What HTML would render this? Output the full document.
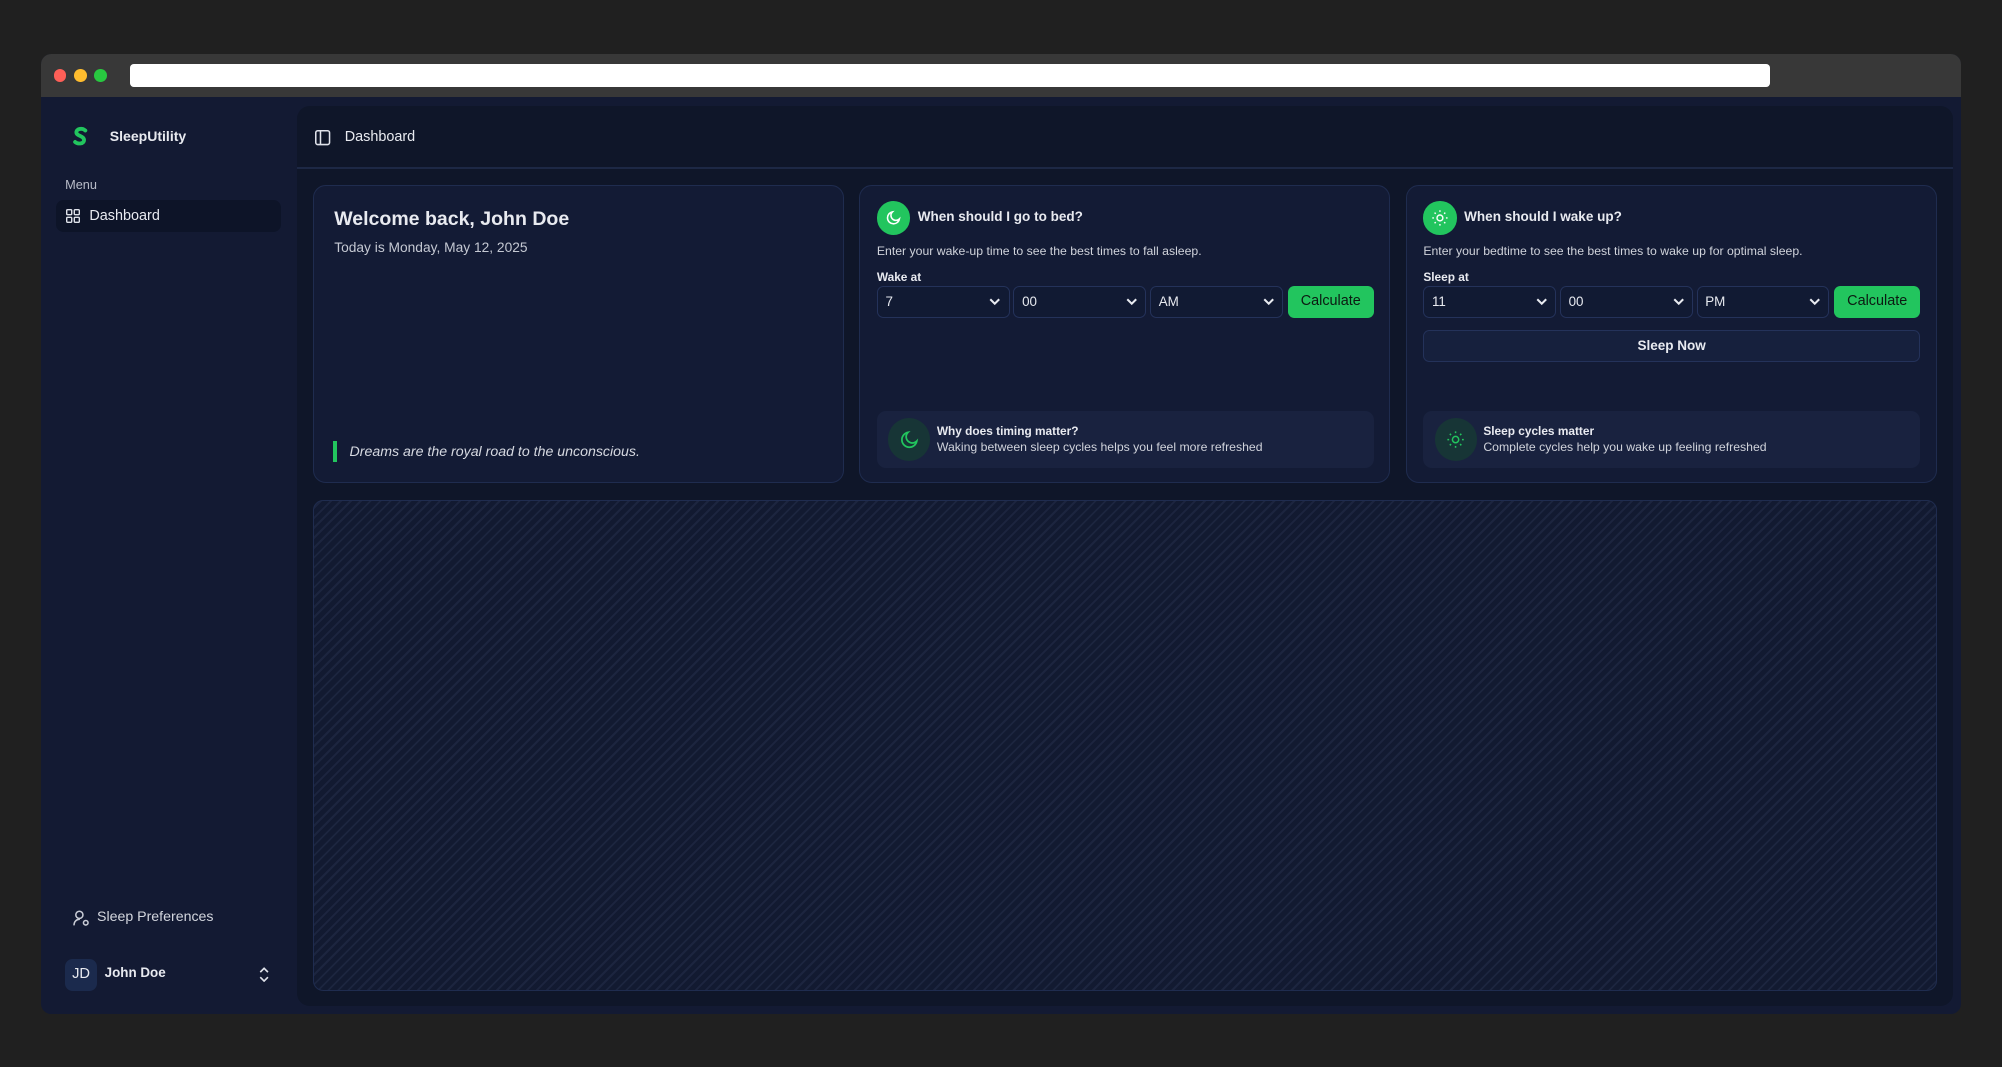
<!DOCTYPE html>
<html><head><meta charset="utf-8"><style>
*{box-sizing:border-box;margin:0;padding:0}
html,body{width:2002px;height:1067px;overflow:hidden;background:#202020;font-family:"Liberation Sans",sans-serif}
#w{width:1568px;height:836px;position:relative;zoom:1.27679}
.abs{position:absolute}
.win{left:32px;top:42px;width:1504px;height:752px;border-radius:8px;overflow:hidden;background:#131a33}
.tb{left:0;top:0;width:1504px;height:34px;background:#383838}
.dot{width:10px;height:10px;border-radius:50%;top:12px}
.url{left:70px;top:8px;width:1284px;height:18px;background:#fff;border-radius:3px}
.main{left:201px;top:41px;width:1297px;height:705px;background:#0f1629;border-radius:10px}
.t{color:#e8eaf0;white-space:nowrap}
.card{background:#131b35;border:1px solid #1f2c4f;border-radius:10px;top:62px;height:233px;width:416px}
.sel{top:78px;height:25px;width:104px;border:1px solid #24325a;border-radius:5px;background:#111a33;color:#e8eaf0;font-size:10.5px;padding:6px 6px}
.sel svg{position:absolute;right:6px;top:9px}
.btn{top:78px;height:25px;width:67px;background:#22c55e;border-radius:5px;color:#0c1a12;font-size:11.3px;text-align:center;line-height:25px}
.info{left:13px;top:176px;width:389px;height:45px;background:#19223f;border-radius:7px}
.ic{left:9px;top:6px;width:33px;height:33px;border-radius:50%;background:#173536}
.gc{left:13px;top:12px;width:26px;height:26px;border-radius:50%;background:#22c55e}
</style></head><body><div id="w">
<div class="abs win">
 <div class="abs tb"><div class="abs dot" style="left:10px;background:#fe5f57"></div><div class="abs dot" style="left:26px;background:#febc2e"></div><div class="abs dot" style="left:42px;background:#28c840"></div><div class="abs url"></div></div>
 <svg class="abs" style="left:23px;top:57px" width="16" height="16" viewBox="0 0 16 16"><path d="M12 3.5C10 1.5 5 1.8 5 5c0 3 6 2.5 6 6 0 3-4.5 3.5-7 1.5" stroke="#22c55e" stroke-width="3" fill="none" stroke-linecap="round"/></svg>
 <div class="abs t" style="left:54px;top:58px;font-size:11px;font-weight:bold">SleepUtility</div>
 <div class="abs t" style="left:19px;top:97px;font-size:10px;color:#b8bcc8">Menu</div>
 <div class="abs" style="left:12px;top:115px;width:176px;height:25px;background:#0d1428;border-radius:6px"></div>
 <svg class="abs" style="left:20px;top:122px" width="11" height="11" viewBox="0 0 12 12" fill="none" stroke="#dfe2ea" stroke-width="1.2"><rect x=".6" y=".6" width="4.3" height="4.3" rx=".8"/><rect x="7.1" y=".6" width="4.3" height="4.3" rx=".8"/><rect x=".6" y="7.1" width="4.3" height="4.3" rx=".8"/><rect x="7.1" y="7.1" width="4.3" height="4.3" rx=".8"/></svg>
 <div class="abs t" style="left:38px;top:121px;font-size:11.3px">Dashboard</div>
 <svg class="abs" style="left:25px;top:671px" width="13" height="13" viewBox="0 0 13 13" fill="none" stroke="#c9ccd6" stroke-width="1.2"><circle cx="5" cy="3.8" r="2.8"/><path d="M.8 12c0-3 2-4.8 4.6-4.8"/><circle cx="10" cy="10" r="1.8"/></svg>
 <div class="abs t" style="left:44px;top:670px;font-size:11.1px;color:#d3d6de">Sleep Preferences</div>
 <div class="abs" style="left:19px;top:709px;width:25px;height:25px;background:#1b2a4d;border-radius:6px;color:#e8eaf0;font-size:11.5px;text-align:center;line-height:25px">JD</div>
 <div class="abs t" style="left:50px;top:714px;font-size:10.5px;font-weight:bold">John Doe</div>
 <svg class="abs" style="left:171px;top:715px" width="8" height="12" viewBox="0 0 8 12" fill="none" stroke="#dfe2ea" stroke-width="1.3"><path d="M1 4l3-3 3 3M1 8l3 3 3-3"/></svg>
 <div class="abs main">
  <svg class="abs" style="left:14px;top:19px" width="12" height="12" viewBox="0 0 12 12" fill="none" stroke="#dfe2ea" stroke-width="1.2"><rect x=".6" y=".6" width="10.8" height="10.8" rx="1.5"/><path d="M4.3 .6v10.8"/></svg>
  <div class="abs t" style="left:37px;top:18px;font-size:11.3px">Dashboard</div>
  <div class="abs" style="left:0;top:48px;width:1297px;height:1px;background:#1d2845"></div>
  <div class="abs card" style="left:12px">
   <div class="abs t" style="left:16px;top:17px;font-size:15.3px;font-weight:bold">Welcome back, John Doe</div>
   <div class="abs t" style="left:16px;top:42px;font-size:10.8px;color:#c4c8d2">Today is Monday, May 12, 2025</div>
   <div class="abs" style="left:15px;top:200px;width:3px;height:16px;background:#22c55e"></div>
   <div class="abs t" style="left:28px;top:202px;font-size:11.1px;font-style:italic;color:#d6d9e1">Dreams are the royal road to the unconscious.</div>
  </div>
  <div class="abs card" style="left:440px">
   <div class="abs gc"><svg class="abs" style="left:7px;top:7px" width="12" height="12" viewBox="0 0 12 12" fill="none" stroke="#fff" stroke-width="1.2"><path d="M10.5 7A4.7 4.7 0 1 1 5 1.5 3.7 3.7 0 0 0 10.5 7z"/></svg></div>
   <div class="abs t" style="left:45px;top:18px;font-size:10.6px;font-weight:bold">When should I go to bed?</div>
   <div class="abs t" style="left:13px;top:45px;font-size:9.6px;color:#d0d3db">Enter your wake-up time to see the best times to fall asleep.</div>
   <div class="abs t" style="left:13px;top:66px;font-size:9.3px;font-weight:bold">Wake at</div>
   <div class="abs sel" style="left:13px">7<svg width="9" height="6" viewBox="0 0 9 6"><path d="M1 1l3.5 3.5L8 1" stroke="#e8eaf0" stroke-width="1.6" fill="none"/></svg></div>
   <div class="abs sel" style="left:120px">00<svg width="9" height="6" viewBox="0 0 9 6"><path d="M1 1l3.5 3.5L8 1" stroke="#e8eaf0" stroke-width="1.6" fill="none"/></svg></div>
   <div class="abs sel" style="left:227px">AM<svg width="9" height="6" viewBox="0 0 9 6"><path d="M1 1l3.5 3.5L8 1" stroke="#e8eaf0" stroke-width="1.6" fill="none"/></svg></div>
   <div class="abs btn" style="left:335px">Calculate</div>
   <div class="abs info"><div class="abs ic"><svg class="abs" style="left:9px;top:9px" width="15" height="15" viewBox="0 0 12 12" fill="none" stroke="#22c55e" stroke-width="1.1"><path d="M10.5 7A4.7 4.7 0 1 1 5 1.5 3.7 3.7 0 0 0 10.5 7z"/></svg></div>
    <div class="abs t" style="left:47px;top:10px;font-size:9.3px;font-weight:bold">Why does timing matter?</div>
    <div class="abs t" style="left:47px;top:23px;font-size:9.6px;color:#d0d3db">Waking between sleep cycles helps you feel more refreshed</div></div>
  </div>
  <div class="abs card" style="left:868px">
   <div class="abs gc"><svg class="abs" style="left:6px;top:6px" width="14" height="14" viewBox="0 0 14 14" fill="none" stroke="#fff" stroke-width="1.1"><circle cx="7" cy="7" r="2.3"/><path d="M7 1v1.3M7 11.7V13M1 7h1.3M11.7 7H13M2.8 2.8l.9.9M10.3 10.3l.9.9M2.8 11.2l.9-.9M10.3 3.7l.9-.9"/></svg></div>
   <div class="abs t" style="left:45px;top:18px;font-size:10.6px;font-weight:bold">When should I wake up?</div>
   <div class="abs t" style="left:13px;top:45px;font-size:9.6px;color:#d0d3db">Enter your bedtime to see the best times to wake up for optimal sleep.</div>
   <div class="abs t" style="left:13px;top:66px;font-size:9.3px;font-weight:bold">Sleep at</div>
   <div class="abs sel" style="left:13px">11<svg width="9" height="6" viewBox="0 0 9 6"><path d="M1 1l3.5 3.5L8 1" stroke="#e8eaf0" stroke-width="1.6" fill="none"/></svg></div>
   <div class="abs sel" style="left:120px">00<svg width="9" height="6" viewBox="0 0 9 6"><path d="M1 1l3.5 3.5L8 1" stroke="#e8eaf0" stroke-width="1.6" fill="none"/></svg></div>
   <div class="abs sel" style="left:227px">PM<svg width="9" height="6" viewBox="0 0 9 6"><path d="M1 1l3.5 3.5L8 1" stroke="#e8eaf0" stroke-width="1.6" fill="none"/></svg></div>
   <div class="abs btn" style="left:335px">Calculate</div>
   <div class="abs" style="left:13px;top:113px;width:389px;height:25px;background:#16203d;border:1px solid #24325a;border-radius:5px;color:#e8eaf0;font-size:10.6px;font-weight:bold;text-align:center;line-height:23px">Sleep Now</div>
   <div class="abs info"><div class="abs ic"><svg class="abs" style="left:9px;top:9px" width="15" height="15" viewBox="0 0 14 14" fill="none" stroke="#22c55e" stroke-width="1.1"><circle cx="7" cy="7" r="2.3"/><path d="M7 1v1.3M7 11.7V13M1 7h1.3M11.7 7H13M2.8 2.8l.9.9M10.3 10.3l.9.9M2.8 11.2l.9-.9M10.3 3.7l.9-.9"/></svg></div>
    <div class="abs t" style="left:47px;top:10px;font-size:9.3px;font-weight:bold">Sleep cycles matter</div>
    <div class="abs t" style="left:47px;top:23px;font-size:9.6px;color:#d0d3db">Complete cycles help you wake up feeling refreshed</div></div>
  </div>
  <div class="abs" style="left:12px;top:309px;width:1272px;height:384px;border:1px solid #1f2c4f;border-radius:8px;background:repeating-linear-gradient(-45deg,#121a31 0 4px,#1c253f 4px 5.5px)"></div>
 </div>
</div>
</div></body></html>
